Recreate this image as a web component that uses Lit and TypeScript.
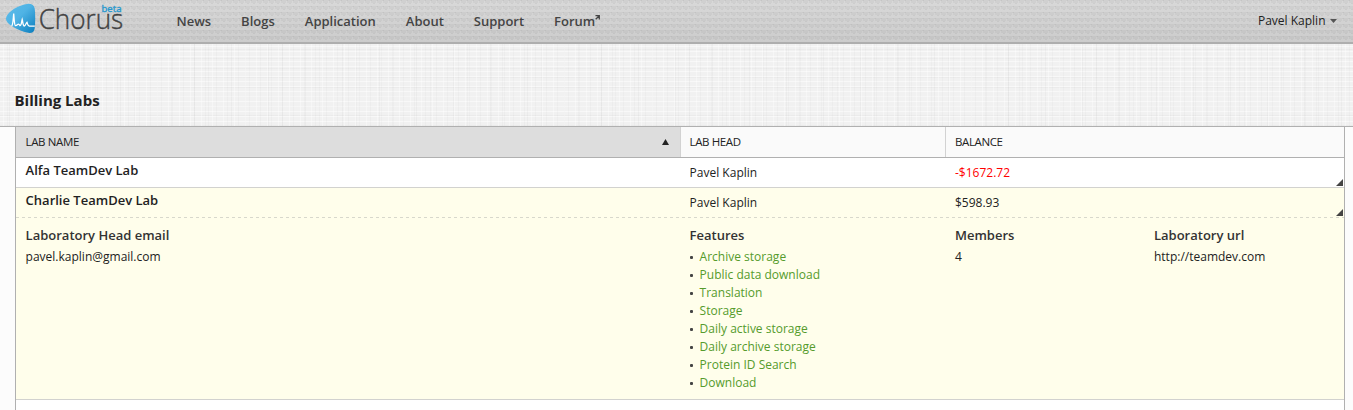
import { LitElement, html, css, svg } from "lit";
import { customElement } from "lit/decorators.js";

const NAV = ["News", "Blogs", "Application", "About", "Support", "Forum"];
const FEATURES = [
  "Archive storage", "Public data download", "Translation", "Storage",
  "Daily active storage", "Daily archive storage", "Protein ID Search", "Download",
];

const corner = html`<svg class="corner" width="7" height="7" viewBox="0 0 7 7"><path d="M7 0V7H0Z" fill="#444"/></svg>`;

@customElement("chorus-logo")
export class ChorusLogo extends LitElement {
  static styles = css`
    :host { display: block; width: 126px; height: 42px; }
    svg { display: block; overflow: visible; font-family: "Open Sans", sans-serif; }
    .word { font-size: 28px; font-weight: 300; }
    .beta { font-size: 9.5px; font-weight: 400; }
  `;
  render() {
    return html`<svg width="126" height="42" viewBox="0 0 126 42">
      ${svg`<defs>
        <linearGradient id="drop" x1="0" y1="0" x2="1" y2="1">
          <stop offset="0" stop-color="#5cbce9"/><stop offset=".45" stop-color="#4fb3e5"/><stop offset="1" stop-color="#0a7dbd"/>
        </linearGradient>
      </defs>
      <path d="M27 4C31 3.300 34.300 5 34.700 8.500C35.400 14 35.400 23 34.700 28.500C34.200 32.500 31 33.700 27 32.600C19 30.400 11 26.500 7.500 22.500C5.400 20 5.600 17.500 7.500 14.800C11.500 9.300 19.500 5.300 27 4Z" fill="url(#drop)"/>
      <path d="M11.500 26.200C13 25.500 13.100 20 13.700 13.500C14.300 20 14.300 25.500 15.500 25.700C17.500 26 18 22 20 25.700C21.300 25.700 21.500 22 22.200 19.500C22.900 22 22.900 26 24.300 26C25.500 26 26 23 27 22.300C27.600 24 27.700 26 29.500 26.200H34.800" fill="none" stroke="#fff" stroke-width="1.300"/>
      <text class="word" x="38.700" y="29" fill="#424242" stroke="#424242" stroke-width=".4" textLength="84.500" lengthAdjust="spacingAndGlyphs">Chorus</text>
      <text class="beta" x="101.500" y="12" fill="#2597cd" stroke="#2597cd" stroke-width=".35" textLength="20" lengthAdjust="spacingAndGlyphs">beta</text>`}
    </svg>`;
  }
}

@customElement("app-root")
export class AppRoot extends LitElement {
  static styles = css`
    :host {
      display: block; height: 410px; overflow: hidden; background: #fcfcfc;
      font: 12px/18px "Open Sans", sans-serif; color: #222;
    }
    * { box-sizing: border-box; }
    .top {
      display: flex; height: 44px; border-bottom: 2px solid #aeaeae;
      background:
        conic-gradient(from 90deg at 4px 1px, #0000 75%, #0000000d 0) 0 0 / 6px 6px,
        conic-gradient(from 90deg at 1px 3px, #0000 75%, #0000000a 0) 4px 0 / 6px 6px,
        conic-gradient(from 90deg at 4px 1px, #0000 75%, #0000000d 0) 3px 3px / 6px 6px,
        linear-gradient(#d9d9d9, #cccccc);
    }
    chorus-logo { flex: none; }
    nav { display: flex; flex: 1; padding-left: 50.5px; }
    .link { height: 42px; font-size: 13px; font-weight: 600; line-height: 43px; color: #444; margin-right: 30px; white-space: nowrap; display: flex; }
    .ext { margin: 15px 0 0; }
    .user { display: flex; align-items: center; gap: 4px; height: 41px; padding-right: 16.5px; }
    .title {
      height: 83px; padding: 45px 0 0 14.5px; border-bottom: 1px solid #b0b0b0;
      background:
        repeating-linear-gradient(90deg, #0000 0 3px, #ffffff60 3px 4px, #0000 4px 7px, #00000005 7px 8px, #0000 8px 11px),
        repeating-linear-gradient(90deg, #0000 0 9px, #00000007 9px 10px, #0000 10px 23px, #00000005 23px 24px, #0000 24px 37px),
        repeating-linear-gradient(#0000 0 2px, #ffffff80 2px 3px, #0000 3px 5px),
        repeating-linear-gradient(#0000 0 5px, #00000006 5px 6px, #0000 6px 14px, #00000006 14px 15px, #0000 15px 19px),
        #f1f1f1;
    }
    h1 { margin: 0; font-size: 15px; font-weight: 700; line-height: 22px; }
    .table { width: 1330px; height: 283px; margin-left: 15px; border: solid #b0b0b0; border-width: 0 1px; background: #fff; }
    .row { display: grid; grid-template-columns: 664px 265.4px 199px 1fr; height: 30px; border-bottom: 1px solid #d2d2cf; position: relative; }
    .row > div { padding-left: 9.6px; line-height: 29px; }
    .row.head { height: 31px; background: #fafafa; border-color: #b0b0b0; font-size: 11.5px; letter-spacing: -.38px; }
    .row.head > div { line-height: 30px; }
    .row.head .sorted { display: flex; justify-content: space-between; align-items: center; padding-right: 11px; background: #ddd; }
    .row.head .sep { border-left: 1px solid #d2d2d2; padding-left: 8.6px; }
    .row > .name { font-size: 13px; font-weight: 600; line-height: 24px; }
    .row > .neg { color: #f00; }
    .open { background: #fffeeb; }
    .main { border-bottom: 0; background: repeating-linear-gradient(90deg, #d8d8cc 0 3px, #0000 3px 6px) 0 100% / 100% 1px no-repeat #fffeeb; }
    .corner { position: absolute; right: 1px; bottom: 1px; }
    .main .corner { bottom: 2px; }
    .row.detail { height: 182px; }
    .row.detail > div { padding-top: 8px; line-height: 18px; }
    h2 { margin: 0 0 4px; font-size: 13px; line-height: 18px; font-weight: 600; color: #333; }
    ul { list-style: none; margin: 0; padding: 0; }
    li { display: flex; align-items: center; color: #559b2b; gap: 7px; }
    li::before { content: ""; width: 3px; height: 3px; border-radius: 1px; background: #444; }
  `;

  render() {
    return html`
      <header class="top">
        <chorus-logo></chorus-logo>
        <nav>${NAV.map((n) => html`<a class="link">${n}${n === "Forum"
          ? html`<svg class="ext" width="5" height="5" viewBox="0 0 5 5"><path d="M.5 .7H4.300V4.500M4.300 .7L.7 4.300" fill="none" stroke="#444" stroke-width="1.300"/></svg>` : ""}</a>`)}</nav>
        <div class="user"><span>Pavel Kaplin</span><svg width="7" height="4" viewBox="0 0 7 4"><path d="M0 0H7L3.500 4Z" fill="#555"/></svg></div>
      </header>
      <section class="title"><h1>Billing Labs</h1></section>
      <main class="table">
        <div class="row head">
          <div class="sorted"><span>LAB NAME</span><svg width="7" height="6" viewBox="0 0 7 6"><path d="M3.500 0L7 6H0Z" fill="#222"/></svg></div>
          <div class="sep">LAB HEAD</div><div class="sep">BALANCE</div><div></div>
        </div>
        <div class="row"><div class="name">Alfa TeamDev Lab</div><div>Pavel Kaplin</div><div class="neg">-$1672.72</div>${corner}</div>
        <div class="row open main"><div class="name">Charlie TeamDev Lab</div><div>Pavel Kaplin</div><div>$598.93</div>${corner}</div>
        <div class="row open detail">
          <div><h2>Laboratory Head email</h2>pavel.kaplin@gmail.com</div>
          <div><h2>Features</h2><ul>${FEATURES.map((f) => html`<li>${f}</li>`)}</ul></div>
          <div><h2>Members</h2>4</div>
          <div><h2>Laboratory url</h2>http://teamdev.com</div>
        </div>
      </main>`;
  }
}
